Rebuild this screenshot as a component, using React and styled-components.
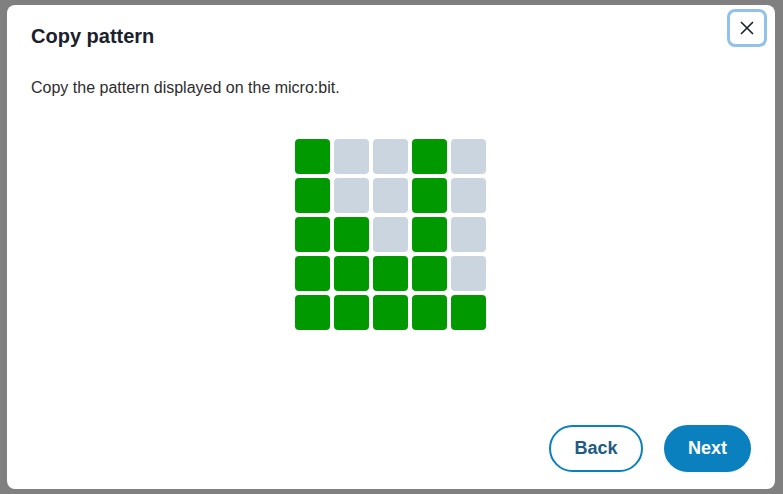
import React from 'react';
import styled, { createGlobalStyle } from 'styled-components';

const Global = createGlobalStyle`
  html, body { margin: 0; padding: 0; }
  body {
    background: #808080;
    font-family: "Liberation Sans", Arial, sans-serif;
  }
`;

const Overlay = styled.div`
  width: 783px;
  height: 494px;
  box-sizing: border-box;
  padding: 5px 8px 5px 7px;
  display: flex;
`;

const Dialog = styled.div`
  flex: 1;
  background: #fff;
  border-radius: 8px;
  display: flex;
  flex-direction: column;
  padding: 0 24px 17px 24px;
`;

const Header = styled.div`
  display: flex;
  align-items: flex-start;
  justify-content: space-between;
  padding-top: 4px;
  margin-right: -16px;
`;

const Title = styled.h2`
  margin: 16px 0 0 0;
  font-size: 20px;
  font-weight: 700;
  color: #1a202c;
`;

const CloseButton = styled.button`
  width: 40px;
  height: 38px;
  box-sizing: border-box;
  border: 3px solid #90c2ec;
  border-radius: 8px;
  background: #fff;
  display: flex;
  align-items: center;
  justify-content: center;
  padding: 0;
  color: #1a202c;
`;

const Message = styled.p`
  margin: 31px 0 0 0;
  font-size: 16px;
  color: #2d2d2d;
`;

const Grid = styled.div`
  align-self: center;
  margin: 42px 0 0 -1px;
  display: grid;
  grid-template-columns: repeat(5, 35px);
  grid-auto-rows: 35px;
  gap: 4px;
`;

const Cell = styled.div`
  border-radius: 4px;
  background: ${p => (p.$on ? '#009a00' : '#cbd5df')};
`;

const Footer = styled.div`
  margin-top: auto;
  display: flex;
  justify-content: flex-end;
  gap: 21px;
`;

const Button = styled.button`
  height: 47px;
  border-radius: 24px;
  font-family: inherit;
  font-size: 18px;
  font-weight: 700;
  box-sizing: border-box;
  padding: 0;
  width: ${p => p.$w}px;
  border: 2px solid #0a80be;
  background: ${p => (p.$primary ? '#0a80be' : '#fff')};
  color: ${p => (p.$primary ? '#fff' : '#1d5b86')};
`;

const pattern = [
  [1, 0, 0, 1, 0],
  [1, 0, 0, 1, 0],
  [1, 1, 0, 1, 0],
  [1, 1, 1, 1, 0],
  [1, 1, 1, 1, 1],
];

export default function App() {
  return (
    <>
      <Global />
      <Overlay>
        <Dialog>
          <Header>
            <Title>Copy pattern</Title>
            <CloseButton aria-label="Close">
              <svg width="14" height="14" viewBox="0 0 14 14">
                <path d="M1 1L13 13M13 1L1 13" stroke="currentColor" strokeWidth="1.6" />
              </svg>
            </CloseButton>
          </Header>
          <Message>Copy the pattern displayed on the micro:bit.</Message>
          <Grid>
            {pattern.flat().map((v, i) => (
              <Cell key={i} $on={v === 1} />
            ))}
          </Grid>
          <Footer>
            <Button $w={94}>Back</Button>
            <Button $w={87} $primary>Next</Button>
          </Footer>
        </Dialog>
      </Overlay>
    </>
  );
}
